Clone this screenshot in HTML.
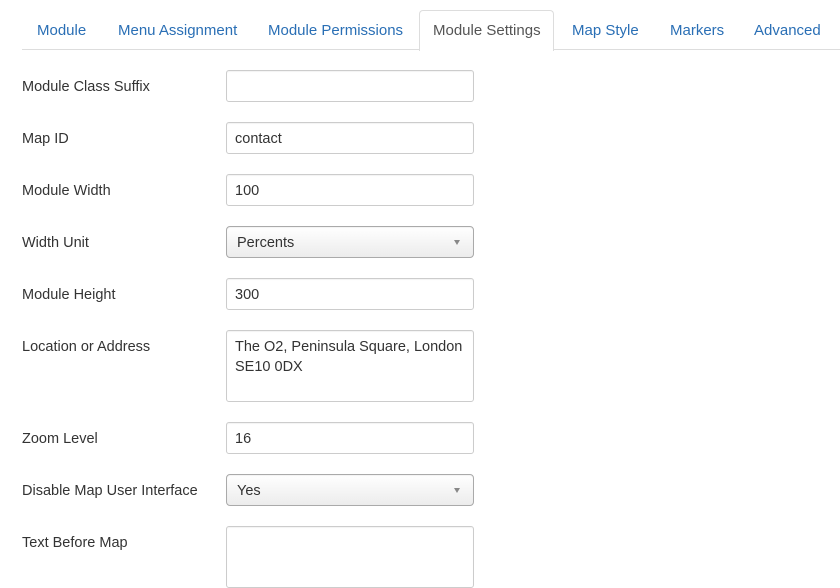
<!DOCTYPE html>
<html><head><style>
body{margin:0;width:840px;height:565px;overflow:hidden;background:#fff;font-family:"Liberation Sans",Arial,sans-serif;font-size:14.5px;color:#333;position:relative}
.tabline{position:absolute;left:22px;right:0;top:49px;height:1px;background:#ddd}
.tab{position:absolute;top:22px;color:#2a6fb5;font-size:15px}
.active{position:absolute;left:419px;top:10px;width:133px;height:40px;border:1px solid #ddd;border-bottom:none;border-radius:4px 4px 0 0;background:#fff}
.lab{position:absolute;left:22px;font-size:14.5px}
.in{position:absolute;left:226px;width:246px;height:30px;border:1px solid #ccc;border-radius:3px;box-sizing:content-box;box-shadow:inset 0 1px 1px rgba(0,0,0,.05)}
.in span{position:absolute;left:8px;top:8px;font-size:14.5px}
.sel{background:linear-gradient(#fff,#ececec);border-color:#aaa;border-radius:4px}
.sel:after{content:"";position:absolute;right:13px;top:13px;border-left:3.5px solid transparent;border-right:3.5px solid transparent;border-top:5px solid #888}
</style></head><body>
<div class="tabline"></div>
<div class="active"></div>
<div class="tab" style="left:37px">Module</div>
<div class="tab" style="left:118px">Menu Assignment</div>
<div class="tab" style="left:268px">Module Permissions</div>
<div class="tab" style="left:433px;color:#555">Module Settings</div>
<div class="tab" style="left:572px">Map Style</div>
<div class="tab" style="left:670px">Markers</div>
<div class="tab" style="left:754px">Advanced</div>

<div class="lab" style="top:79px">Module Class Suffix</div><div class="in" style="top:70px"></div>
<div class="lab" style="top:131px">Map ID</div><div class="in" style="top:122px"><span>contact</span></div>
<div class="lab" style="top:183px">Module Width</div><div class="in" style="top:174px"><span>100</span></div>
<div class="lab" style="top:235px">Width Unit</div><div class="in sel" style="top:226px"><span style="left:10px">Percents</span></div>
<div class="lab" style="top:287px">Module Height</div><div class="in" style="top:278px"><span>300</span></div>
<div class="lab" style="top:339px">Location or Address</div><div class="in" style="top:330px;height:70px"><span style="line-height:20px;top:6px">The O2, Peninsula Square, London<br>SE10 0DX</span></div>
<div class="lab" style="top:431px">Zoom Level</div><div class="in" style="top:422px"><span>16</span></div>
<div class="lab" style="top:483px">Disable Map User Interface</div><div class="in sel" style="top:474px"><span style="left:10px">Yes</span></div>
<div class="lab" style="top:535px">Text Before Map</div><div class="in" style="top:526px;height:60px"></div>
</body></html>
